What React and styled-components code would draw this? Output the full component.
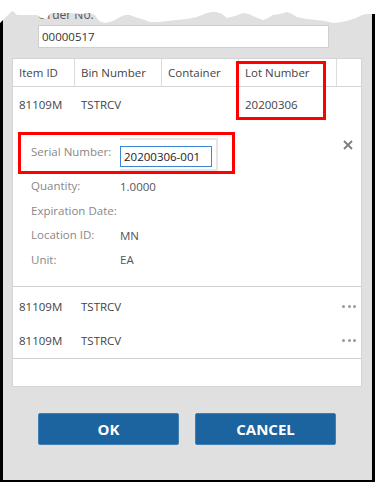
import React from 'react';
import styled, { createGlobalStyle } from 'styled-components';

const GlobalStyle = createGlobalStyle`
  html, body {
    margin: 0;
    padding: 0;
    background: #fff;
  }
  body {
    font-family: "Open Sans", "Noto Sans", "Liberation Sans", sans-serif;
    font-size: 11.5px;
    color: #333;
  }
  * { box-sizing: border-box; }
`;

// page holds the framed dialog plus the torn paper edge over its top
const Page = styled.div`
  position: relative;
  width: 375px;
  height: 482px;
  overflow: hidden;
`;

const Frame = styled.div`
  width: 375px;
  height: 482px;
  background: #e0e0e0;
  border-left: 3px solid #000;
  border-right: 3px solid #000;
  border-bottom: 2px solid #000;
  display: flex;
  flex-direction: column;
`;

const TornEdge = styled.svg`
  position: absolute;
  top: 0;
  left: 0;
`;

const TopSection = styled.div`
  padding: 6px 0 0 35px;
`;

const TopLabel = styled.div`
  height: 19px;
  line-height: 17px;
  color: #555;
  font-size: 12px;
`;

const OrderInput = styled.div`
  width: 291px;
  height: 23px;
  background: #fff;
  border: 1px solid #cfcfcf;
  padding-left: 3px;
  font-size: 11.5px;
  line-height: 21px;
  color: #333;
`;

const Panel = styled.div`
  margin: 10px 0 0 9px;
  width: 350px;
  height: 329px;
  background: #fff;
  border: 1px solid #d4d4d4;
  display: flex;
  flex-direction: column;
`;

const HeaderRow = styled.div`
  display: flex;
  height: 28px;
  border-bottom: 1px solid #d6d6d6;
`;

const HeaderCell = styled.div`
  width: ${(p) => p.w}px;
  flex: ${(p) => (p.w ? 'none' : '1')};
  border-right: ${(p) => (p.last ? 'none' : '1px solid #dcdcdc')};
  padding-left: 6px;
  line-height: 27px;
  color: #444;
  white-space: nowrap;
`;

const Row = styled.div`
  display: flex;
  align-items: center;
  height: ${(p) => p.h || 34}px;
`;

const Cell = styled.div`
  width: ${(p) => p.w}px;
  flex: ${(p) => (p.w ? 'none' : '1')};
  padding-left: 6px;
  color: #444;
  white-space: nowrap;
  display: flex;
  justify-content: ${(p) => (p.end ? 'flex-end' : 'flex-start')};
  padding-right: ${(p) => (p.end ? '5px' : '0')};
`;

const Highlight = styled.div`
  position: absolute;
  border: 3px solid #ff0000;
  pointer-events: none;
`;

const Detail = styled.div`
  display: flex;
  border-bottom: 1px solid #d0d0d0;
  padding: 11px 8px 14px 5px;
`;

const Fields = styled.div`
  flex: 1;
  display: flex;
  flex-direction: column;
`;

const SerialBox = styled.div`
  width: 217px;
  height: 42px;
  border: 3px solid #ff0000;
  padding-left: 10px;
  display: flex;
`;

const Label = styled.div`
  width: 89px;
  flex: none;
  color: #888;
  line-height: 16px;
  margin-top: ${(p) => p.top || 0}px;
  white-space: nowrap;
`;

const SerialFrame = styled.div`
  margin-top: 3px;
  width: 98px;
  height: 33px;
  border: 2px solid #e6e6e6;
  border-left: none;
  padding-top: 6px;
`;

const SerialInput = styled.div`
  width: 92px;
  height: 21px;
  border: 1px solid #3c84d4;
  padding-left: 3px;
  font-size: 11.5px;
  line-height: 19px;
  color: #222;
  white-space: nowrap;
  overflow: hidden;
`;

const FieldRow = styled.div`
  display: flex;
  align-items: center;
  height: 24.5px;
  padding-left: 13px;
`;

const Value = styled.div`
  color: #555;
`;

const CloseBtn = styled.svg`
  flex: none;
  margin-top: 8px;
`;

const RowGroup = styled.div`
  padding-top: 2px;
  border-bottom: 1px solid #d0d0d0;
`;

const Dots = styled.div`
  display: flex;
  gap: 2.5px;
  span {
    width: 3px;
    height: 3px;
    border-radius: 50%;
    background: #9a9a9a;
  }
`;

const ButtonBar = styled.div`
  display: flex;
  gap: 16px;
  margin-top: 26px;
  padding-left: 35px;
`;

const Button = styled.button`
  width: 141px;
  height: 32px;
  background: #1b64a0;
  border: 1px solid #3f7fb5;
  border-radius: 2px;
  color: #fff;
  font-family: "Open Sans", "Noto Sans", sans-serif;
  font-weight: 700;
  font-size: 15px;
  padding: 0;
`;

const cols = [62, 87, 77, 98];

const tornPoints =
  '0,0 375,0 375,14 367,14 362,15 356,18 350,20 342,22 333,23 325,21 317,20 307,19 297,17 292,14 287,12 280,14 273,15 268,18 263,20 255,17 249,14 243,13 235,16 227,18 222,14 217,12 212,12 207,13 197,17 187,19 177,20 167,21 158,22 150,22 142,19 135,17 130,15 125,15 120,17 113,21 105,23 99,21 95,15 90,13 80,14 70,13 60,13 52,13 49,15 46,19 41,18 37,15 27,15 17,15 14,12 12,11 9,14 6,17 3,20 0,23';

const App = () => {
  return (
    <Page>
      <GlobalStyle />
      <Frame>
        <TopSection>
          <TopLabel>Order No.</TopLabel>
          <OrderInput>00000517</OrderInput>
        </TopSection>

        <Panel>
          <HeaderRow>
            <HeaderCell w={cols[0]}>Item ID</HeaderCell>
            <HeaderCell w={cols[1]}>Bin Number</HeaderCell>
            <HeaderCell w={cols[2]}>Container</HeaderCell>
            <HeaderCell w={cols[3]}>Lot Number</HeaderCell>
            <HeaderCell last />
          </HeaderRow>

          <Row>
            <Cell w={cols[0]}>81109M</Cell>
            <Cell w={cols[1]}>TSTRCV</Cell>
            <Cell w={cols[2]} />
            <Cell w={cols[3]}>20200306</Cell>
            <Cell />
          </Row>

          <Detail>
            <Fields>
              <SerialBox>
                <Label top={9}>Serial Number:</Label>
                <SerialFrame>
                  <SerialInput>20200306-001</SerialInput>
                </SerialFrame>
              </SerialBox>
              <FieldRow>
                <Label>Quantity:</Label>
                <Value>1.0000</Value>
              </FieldRow>
              <FieldRow>
                <Label>Expiration Date:</Label>
                <Value />
              </FieldRow>
              <FieldRow>
                <Label>Location ID:</Label>
                <Value>MN</Value>
              </FieldRow>
              <FieldRow>
                <Label>Unit:</Label>
                <Value>EA</Value>
              </FieldRow>
            </Fields>
            <CloseBtn width="10" height="10" viewBox="0 0 10 10">
              <path d="M1 1 L9 9 M9 1 L1 9" stroke="#7c7c7c" strokeWidth="1.8" />
            </CloseBtn>
          </Detail>

          <RowGroup>
            {[0, 1].map((i) => (
              <Row key={i} h={34.5}>
                <Cell w={cols[0]}>81109M</Cell>
                <Cell w={cols[1]}>TSTRCV</Cell>
                <Cell end>
                  <Dots>
                    <span />
                    <span />
                    <span />
                  </Dots>
                </Cell>
              </Row>
            ))}
          </RowGroup>
        </Panel>

        <ButtonBar>
          <Button>OK</Button>
          <Button>CANCEL</Button>
        </ButtonBar>
      </Frame>

      {/* red callout around the lot number column */}
      <Highlight style={{ left: 236, top: 61, width: 90, height: 59 }} />

      <TornEdge width="375" height="26" viewBox="0 0 375 26">
        <polygon points={tornPoints} fill="#fff" />
      </TornEdge>
    </Page>
  );
};

export default App;
